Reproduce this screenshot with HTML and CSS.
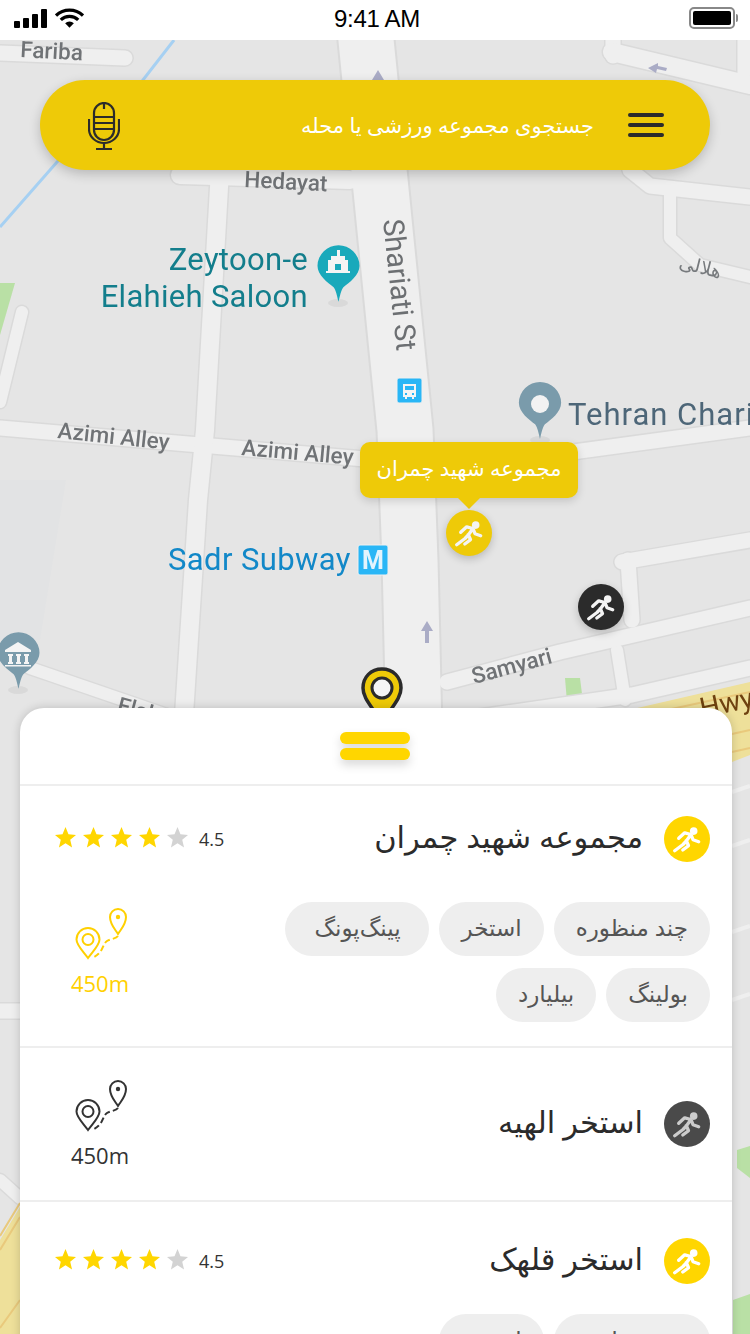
FILE: index.html
```html
<!DOCTYPE html>
<html lang="fa">
<head>
    <meta charset="utf-8">
    <title>Sport Map</title>
    <link rel="stylesheet" href="styles.css">
</head>
<body>
    <svg class="defs" width="0" height="0">
        <symbol id="runner" viewBox="-23 -23 46 46">
            <circle cx="6.700" cy="-7.900" r="3.800" fill="currentColor"/>
            <path d="M-8.300-.7-2.300-6.200 4-4.500-.7 2-4 5.500-12.300 11.700M-4.200 11 1.500 6.700-.7 1.500M4-4.500 6 .7 11.700 2.700" fill="none" stroke="currentColor" stroke-width="3.300" stroke-linecap="round" stroke-linejoin="round"/>
        </symbol>
        <symbol id="star" viewBox="0 0 24 24">
            <path d="M12 0l3.400 8.400 8.600.6-6.600 5.600 2.100 8.800L12 18.700 4.500 23.400l2.100-8.800L0 9l8.600-.6z" fill="currentColor"/>
        </symbol>
        <symbol id="route" viewBox="0 0 60 54">
            <g fill="none" stroke="currentColor" stroke-width="2">
                <path d="M16 51C10 43 4.500 38 4.500 32.500a11.500 11.500 0 0 1 23 0C27.500 38 22 43 16 51z"/>
                <circle cx="16" cy="32.500" r="5.500"/>
                <path d="M46 27C42 21 38 17 38 10a8 8 0 0 1 16 0C54 17 50 21 46 27z"/>
                <path d="M46 29C44 32 38 32 35 34 31 37 31 42 28 45 26 48 24 49 20 51" stroke-dasharray="6 3"/>
            </g>
            <circle cx="46" cy="10" r="2.200" fill="currentColor"/>
        </symbol>
        <symbol id="pin" viewBox="0 0 44 60">
            <path d="M22 0a21.500 21.500 0 0 1 21.500 21C43.500 31 33 38 27 43c-2.500 3-3.500 9-5 15-1.500-6-2.500-12-5-15C11 38 .5 31 .5 21A21.500 21.500 0 0 1 22 0z" fill="currentColor"/>
        </symbol>
    </svg>

    <div class="statusbar">
        <div class="status-left">
            <div class="signal"><i></i><i></i><i></i><i></i></div>
            <svg class="wifi" viewBox="0 0 30 20">
                <path d="M1 7.500a20 20 0 0 1 28 0M6 12a13 13 0 0 1 18 0" fill="none" stroke="#000" stroke-width="3.400"/>
                <path d="M10.500 15.500a6.500 6.500 0 0 1 9 0L15 20z" fill="#000"/>
            </svg>
        </div>
        <div class="clock">9:41 AM</div>
        <div class="status-right">
            <div class="battery"><div class="battery-level"></div></div>
        </div>
    </div>

    <div class="map">
        <svg class="map-canvas" viewBox="0 40 750 1294">
            <defs>
                <g id="roads-12" fill="none" stroke-linecap="round" stroke-linejoin="round">
                    <path d="M22 312 0 402"/>
                    <path d="M670 195V238L700 265 750 277"/>
                    <path d="M30 668 170 716"/>
                    <path d="M617 650 625 700"/>
                    <path d="M0 1180 20 1198"/>
                </g>
                <g id="roads-15" fill="none" stroke-linecap="round" stroke-linejoin="round">
                    <path d="M0 53 125 58"/>
                    <path d="M0 428 200 445 400 462"/>
                    <path d="M440 470 750 428"/>
                    <path d="M447 682 560 652 750 608"/>
                    <path d="M622 562 750 540"/>
                    <path d="M628 560 632 620"/>
                    <path d="M445 722 632 695 750 668"/>
                    <path d="M630 170 650 186 750 197"/>
                    <path d="M613 40V56"/>
                    <path d="M745 40V80"/>
                    <path d="M0 1011H20"/>
                </g>
                <g id="roads-18" fill="none" stroke-linecap="round" stroke-linejoin="round">
                    <path d="M220 170 205 430 198 500 183 730"/>
                    <path d="M180 175 350 180"/>
                    <path d="M612 52 750 85"/>
                </g>
                <path id="road-main" d="M365 30 382 200 405 430 410 560 414 730" fill="none"/>
                <g id="roads-4" fill="none">
                    <path d="M732 792 750 786"/>
                    <path d="M732 846 750 840"/>
                    <path d="M732 932 750 926"/>
                    <path d="M732 1000 750 994"/>
                </g>
            </defs>

            <path class="area-shade" d="M0 480H66L40 640H0z"/>
            <path class="area-green" d="M0 283H15L0 335z"/>
            <path class="area-green" d="M565 678H580L583 702H567z"/>
            <path class="area-green" d="M737 1150 750 1146V1178L737 1168z"/>
            <path class="area-green" d="M733 1300 750 1294V1334H733z"/>

            <use href="#roads-4" stroke="#efefef" stroke-width="4"/>
            <use href="#roads-12" stroke="#dadada" stroke-width="15"/>
            <use href="#roads-15" stroke="#dadada" stroke-width="18"/>
            <use href="#roads-18" stroke="#dadada" stroke-width="21"/>
            <use href="#road-main" stroke="#dadada" stroke-width="59"/>
            <use href="#roads-12" stroke="#efefef" stroke-width="12"/>
            <use href="#roads-15" stroke="#efefef" stroke-width="15"/>
            <use href="#roads-18" stroke="#efefef" stroke-width="18"/>
            <use href="#road-main" stroke="#efefef" stroke-width="55"/>
            <path class="river" d="M174 40 143 80 57 162 0 227"/>

            <path class="area-yellow" d="M620 712 750 682V755L732 762 620 800z"/>
            <path class="area-yellow" d="M0 1240 20 1207V1334H0z"/>
            <path class="stripe" d="M0 1236 20 1203M0 1250 20 1217M0 1328 20 1300"/>
            <path class="stripe" d="M732 734 750 730M732 752 750 748M630 718 750 692"/>

            <text class="label-road" x="20" y="57" transform="rotate(3 20 57)">Fariba</text>
            <text class="label-road" x="244" y="187" transform="rotate(3 244 187)">Hedayat</text>
            <text class="label-road" x="57" y="438" transform="rotate(6 57 438)">Azimi Alley</text>
            <text class="label-road" x="241" y="455" transform="rotate(5 241 455)">Azimi Alley</text>
            <text class="label-road" x="474" y="684" transform="rotate(-15 474 684)">Samyari</text>
            <text class="label-road" x="116" y="712" transform="rotate(15 116 712)">Elah</text>
            <text class="label-main" x="383" y="220" transform="rotate(84 383 220)">Shariati St</text>
            <text class="label-fa" x="678" y="268" transform="rotate(14 678 268)">هلالی</text>
            <text class="label-hwy" x="702" y="718" transform="rotate(-12 702 718)">Hwy</text>

            <text class="label-teal" x="308" y="270" text-anchor="end">Zeytoon-e</text>
            <text class="label-teal" x="308" y="307" text-anchor="end">Elahieh Saloon</text>
            <text class="label-slate" x="568" y="425">Tehran Chari</text>
            <text class="label-blue" x="168" y="570">Sadr Subway</text>

            <ellipse class="pin-shadow" cx="338" cy="303" rx="10" ry="4"/>
            <use href="#pin" x="317" y="245" width="43" height="59" color="#19a9bb"/>
            <path class="poi-glyph" d="M337 250h3v6h5v4h3v11h2v2h-24v-2h2v-11h3v-4h6z"/>
            <rect x="335" y="264" width="6" height="6" fill="#19a9bb"/>

            <ellipse class="pin-shadow" cx="540" cy="440" rx="10" ry="4"/>
            <use href="#pin" x="518" y="382" width="44" height="59" color="#7a9bab"/>
            <circle cx="540" cy="404" r="9" fill="#f2f2f2"/>

            <ellipse class="pin-shadow" cx="18" cy="690" rx="10" ry="4"/>
            <use href="#pin" x="-3" y="632" width="43" height="59" color="#7a9bab"/>
            <path class="poi-glyph" d="M18 642 31 650v2H5v-2zM8 654h5v2h-1v6h1v2H8v-2h1v-6H8zM16 654h5v2h-1v6h1v2h-5v-2h1v-6h-1zM24 654h5v2h-1v6h1v2h-5v-2h1v-6h-1zM5 665h26v1.500H5z"/>

            <rect class="poi-square" x="397" y="378" width="25" height="25" rx="2"/>
            <path class="poi-glyph" d="M403 384h13v13h-2v2h-2v-2h-5v2h-2v-2h-2zM405 386v4h9v-4zM405 393v2h2v-2zM412 393v2h2v-2z"/>

            <rect class="poi-square" x="358" y="545" width="30" height="30" rx="2"/>
            <text class="label-m" x="373" y="569" text-anchor="middle">M</text>

            <path class="one-way" d="M378 70 384 80H380V90H376V80H372z"/>
            <path class="one-way" d="M427 621 433 631H429V643H425V631H421z"/>
            <path class="one-way" d="M648 68 658 63V66L667 68 666 71 657 69 656 73z"/>
        </svg>

        <svg class="place-pin" viewBox="0 0 44 60">
            <path d="M22 2C11 2 3 10 3 21 3 33 15 42 22 58 29 42 41 33 41 21 41 10 33 2 22 2z" fill="#eeca08" stroke="#2b2b2b" stroke-width="3.500"/>
            <circle cx="22" cy="21" r="10" fill="#f5f5f5" stroke="#2b2b2b" stroke-width="3"/>
        </svg>

        <div class="searchbar">
            <svg class="mic" viewBox="0 0 32 48">
                <g fill="none" stroke="#2b2b2b" stroke-width="2.200">
                    <rect x="6" y="1" width="20" height="37" rx="10"/>
                    <path d="M6 15H26M6 21H26M6 27H26M16 1V7"/>
                    <path d="M1 17V27C1 35 8 41 16 41S31 35 31 27V17"/>
                    <path d="M16 41V47M8 47H24"/>
                </g>
            </svg>
            <div class="search-text">جستجوی مجموعه ورزشی یا محله</div>
            <div class="menu-btn"><i></i><i></i><i></i></div>
        </div>

        <div class="tooltip">مجموعه شهید چمران</div>
        <svg class="marker marker-active"><use href="#runner"/></svg>
        <svg class="marker marker-dark"><use href="#runner"/></svg>

        <div class="sheet">
            <div class="sheet-head">
                <div class="handle"><i></i><i></i></div>
            </div>

            <div class="item">
                <div class="item-row">
                    <svg class="item-icon icon-yellow"><use href="#runner"/></svg>
                    <div class="item-title">مجموعه شهید چمران</div>
                    <div class="rating">
                        <svg class="star on"><use href="#star"/></svg>
                        <svg class="star on"><use href="#star"/></svg>
                        <svg class="star on"><use href="#star"/></svg>
                        <svg class="star on"><use href="#star"/></svg>
                        <svg class="star"><use href="#star"/></svg>
                        <span class="rating-num">4.5</span>
                    </div>
                </div>
                <div class="item-body">
                    <div class="chips">
                        <span class="chip">چند منظوره</span>
                        <span class="chip">استخر</span>
                        <span class="chip chip-wide">پینگ‌پونگ</span>
                        <span class="chip">بولینگ</span>
                        <span class="chip">بیلیارد</span>
                    </div>
                    <div class="distance distance-yellow">
                        <svg class="route"><use href="#route"/></svg>
                        <div>450m</div>
                    </div>
                </div>
            </div>

            <div class="item item-compact">
                <div class="item-row">
                    <svg class="item-icon icon-dark"><use href="#runner"/></svg>
                    <div class="item-title">استخر الهیه</div>
                    <div class="distance">
                        <svg class="route"><use href="#route"/></svg>
                        <div>450m</div>
                    </div>
                </div>
            </div>

            <div class="item item-last">
                <div class="item-row">
                    <svg class="item-icon icon-yellow"><use href="#runner"/></svg>
                    <div class="item-title">استخر قلهک</div>
                    <div class="rating">
                        <svg class="star on"><use href="#star"/></svg>
                        <svg class="star on"><use href="#star"/></svg>
                        <svg class="star on"><use href="#star"/></svg>
                        <svg class="star on"><use href="#star"/></svg>
                        <svg class="star"><use href="#star"/></svg>
                        <span class="rating-num">4.5</span>
                    </div>
                </div>
                <div class="item-body">
                    <div class="chips">
                        <span class="chip">چند منظوره</span>
                        <span class="chip">استخر</span>
                    </div>
                </div>
            </div>
        </div>
    </div>
</body>
</html>
```
FILE: styles.css
```css
body {
    margin: 0;
    width: 750px;
    height: 1334px;
    overflow: hidden;
    background: #e5e5e5;
    font-family: "Open Sans", "DejaVu Sans", sans-serif;
    color: #2b2b2b;
}

.defs {
    position: absolute;
}

/* status bar */
.statusbar {
    height: 40px;
    background: #fff;
    display: flex;
    align-items: center;
    padding: 0 15px 0 14px;
    position: relative;
}

.status-left {
    flex: 1;
    display: flex;
    align-items: center;
    gap: 8px;
    height: 40px;
    padding-bottom: 4px;
    box-sizing: border-box;
}

.status-right {
    flex: 1;
    display: flex;
    justify-content: flex-end;
}

.signal {
    display: flex;
    align-items: flex-end;
    gap: 3px;
    height: 19px;
}

.signal i {
    display: block;
    width: 6px;
    background: #000;
    border-radius: 1px;
}

.signal i:nth-child(1) { height: 7px; }
.signal i:nth-child(2) { height: 10px; }
.signal i:nth-child(3) { height: 14px; }
.signal i:nth-child(4) { height: 19px; }

.wifi {
    width: 29px;
    height: 20px;
}

.clock {
    font-family: "Liberation Sans", sans-serif;
    font-size: 24px;
    color: #000;
    letter-spacing: -0.3px;
    margin-left: 5px;
    margin-bottom: 2px;
}

.battery {
    width: 46px;
    height: 22px;
    border: 2px solid #888;
    border-radius: 5px;
    box-sizing: border-box;
    padding: 2px;
    margin-bottom: 4px;
    position: relative;
}

.battery::after {
    content: "";
    position: absolute;
    right: -5px;
    top: 5px;
    width: 2px;
    height: 8px;
    background: #888;
    border-radius: 0 2px 2px 0;
}

.battery-level {
    height: 100%;
    background: #000;
    border-radius: 2px;
}

/* map */
.map {
    position: relative;
    height: 1294px;
    overflow: hidden;
}

.map-canvas {
    display: block;
    width: 750px;
    height: 1294px;
    filter: blur(0.7px);
}

.area-shade { fill: #e2e3e4; }
.area-green { fill: #b9e0a5; }
.area-yellow { fill: #eee09a; }
.stripe { fill: none; stroke: #e9c97c; stroke-width: 2; }
.river { fill: none; stroke: #a6d0f2; stroke-width: 3; }
.pin-shadow { fill: #d9d9d9; }
.poi-glyph { fill: #f4f4f4; }
.poi-square { fill: #29b6f6; stroke: #f0f0f0; stroke-width: 1; }
.one-way { fill: #aaacc6; }

.label-road {
    font-family: Roboto, sans-serif;
    font-size: 22.5px;
    font-weight: 500;
    fill: #707376;
}

.label-main {
    font-family: Roboto, sans-serif;
    font-size: 29px;
    fill: #6c6f72;
}

.label-fa {
    font-size: 19px;
    fill: #777a7d;
}

.label-hwy {
    font-family: Roboto, sans-serif;
    font-size: 28px;
    fill: #6f4210;
}

.label-teal,
.label-slate,
.label-blue {
    font-family: Roboto, sans-serif;
    font-size: 31px;
    letter-spacing: 0.3px;
}

.label-teal { fill: #137e8c; }
.label-slate { fill: #4d6678; letter-spacing: 1px; }
.label-blue { fill: #1288c8; letter-spacing: 0.4px; }

.label-m {
    font-family: Roboto, sans-serif;
    font-size: 25px;
    font-weight: 700;
    fill: #e3f4fd;
}

/* things on top of the map */
.place-pin {
    position: absolute;
    left: 360px;
    top: 627px;
    width: 44px;
    height: 60px;
}

.searchbar {
    position: absolute;
    left: 40px;
    top: 40px;
    width: 670px;
    height: 90px;
    box-sizing: border-box;
    padding: 0 46px 0 48px;
    border-radius: 45px;
    background: #eeca08;
    box-shadow: 0 4px 12px rgba(0, 0, 0, 0.2);
    display: flex;
    align-items: center;
}

.mic {
    width: 32px;
    height: 48px;
    margin-top: 2px;
}

.search-text {
    flex: 1;
    direction: rtl;
    color: #fff;
    font-size: 21px;
    margin-right: 34px;
}

.menu-btn i {
    display: block;
    width: 36px;
    height: 4px;
    background: #2b2b2b;
    border-radius: 2px;
    margin: 6px 0;
}

.tooltip {
    position: absolute;
    left: 360px;
    top: 402px;
    width: 218px;
    height: 56px;
    line-height: 52px;
    text-align: center;
    direction: rtl;
    color: #fff;
    font-size: 21px;
    background: #eeca08;
    border-radius: 10px;
    box-shadow: 0 3px 8px rgba(0, 0, 0, 0.15);
}

.tooltip::after {
    content: "";
    position: absolute;
    left: 98px;
    top: 56px;
    border: 11px solid transparent;
    border-top-color: #eeca08;
    border-bottom: 0;
}

.marker {
    position: absolute;
    width: 46px;
    height: 46px;
    border-radius: 50%;
    color: #f4f4f4;
    box-shadow: 0 3px 8px rgba(0, 0, 0, 0.2);
}

.marker-active {
    left: 446px;
    top: 470px;
    background: #eeca08;
}

.marker-dark {
    left: 578px;
    top: 544px;
    background: #2b2b2b;
}

/* bottom sheet */
.sheet {
    position: absolute;
    left: 20px;
    top: 668px;
    width: 712px;
    height: 640px;
    background: #fff;
    border-radius: 24px 24px 0 0;
    box-shadow: 0 0 10px rgba(0, 0, 0, 0.18);
}

.sheet-head {
    box-sizing: border-box;
    padding-top: 24px;
    border-bottom: 2px solid #eee;
    height: 78px;
}

.handle {
    width: 70px;
    margin-left: 320px;
    filter: drop-shadow(0 5px 5px rgba(0, 0, 0, 0.15));
}

.handle i {
    display: block;
    height: 12px;
    margin-bottom: 4px;
    background: #ffd600;
    border-radius: 6px;
}

.item {
    padding: 30px 22px 24px 30px;
    border-bottom: 2px solid #eee;
}

.item-compact {
    padding: 30px 22px 30px 30px;
    height: 92px;
}

.item-last {
    padding-top: 36px;
}

.item-last .item-body {
    margin-top: 30px;
}

.item-row {
    display: flex;
    flex-direction: row-reverse;
    align-items: center;
    height: 46px;
}

.item-compact .item-row {
    height: 92px;
}

.item-icon {
    width: 46px;
    height: 46px;
    border-radius: 50%;
    flex: none;
}

.icon-yellow {
    background: #ffd600;
    color: #fff;
}

.icon-dark {
    background: #4a4a4a;
    color: #ccc;
}

.item-title {
    direction: rtl;
    font-size: 30.5px;
    margin-right: 21px;
    margin-bottom: 6px;
    flex: 1;
    color: #2b2b2b;
}

.rating {
    display: flex;
    align-items: center;
    gap: 7px;
    margin-left: 5px;
}

.star {
    width: 21px;
    height: 21px;
    margin-bottom: 3px;
    color: #d3d3d3;
}

.star.on {
    color: #ffd600;
}

.rating-num {
    font-size: 18px;
    margin-left: 4px;
    color: #333;
}

.item-body {
    display: flex;
    flex-direction: row-reverse;
    justify-content: space-between;
    margin-top: 40px;
}

.chips {
    direction: rtl;
    display: flex;
    flex-wrap: wrap;
    gap: 12px 10px;
    width: 440px;
}

.chip {
    height: 54px;
    line-height: 50px;
    padding: 0 22px;
    border-radius: 27px;
    background: #eee;
    font-size: 23px;
    color: #555;
    box-sizing: border-box;
}

.chip-wide {
    min-width: 144px;
    text-align: center;
}

.distance {
    width: 100px;
    text-align: center;
    font-size: 22px;
    line-height: 30px;
    color: #333;
}

.distance-yellow {
    color: #ffd000;
    margin-top: 5px;
}

.route {
    display: block;
    width: 60px;
    height: 54px;
    margin: 0 auto 7px;
    position: relative;
    left: 2px;
}
```
